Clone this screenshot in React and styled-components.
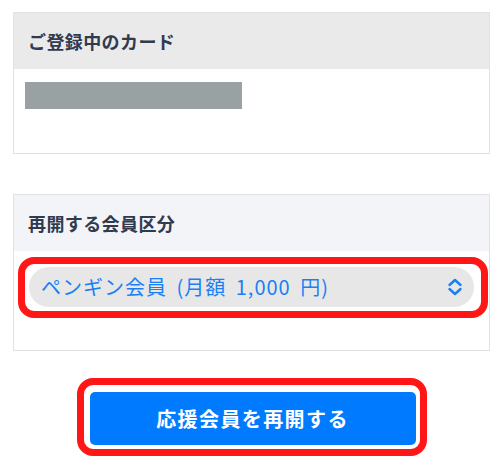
import React from "react";
import styled, { createGlobalStyle } from "styled-components";

const Global = createGlobalStyle`
  html, body { margin: 0; padding: 0; background: #ffffff; }
  body { font-family: "Noto Sans CJK JP", "Noto Sans", sans-serif; }
  * { box-sizing: border-box; }
`;

const Page = styled.div`
  width: 503px;
  padding: 12px 13px 0 13px;
  display: flex;
  flex-direction: column;
`;

const Card = styled.section`
  border: 1px solid #e2e2e2;
  background: #ffffff;
  display: flex;
  flex-direction: column;
  margin-bottom: ${(p) => p.$gap || 0}px;
`;

const CardHeader = styled.div`
  height: 56px;
  background: ${(p) => p.$bg};
  display: flex;
  align-items: center;
  padding: 0 14px;
`;

const Title = styled.h2`
  margin: 0;
  font-size: 18px;
  font-weight: 700;
  letter-spacing: 0.4px;
  color: #303b50;
  line-height: 1;
`;

const CardBody = styled.div`
  padding: ${(p) => p.$pad};
  min-height: ${(p) => p.$min}px;
  display: flex;
  flex-direction: column;
  align-items: flex-start;
`;

const Masked = styled.div`
  width: 217px;
  height: 27px;
  background: #9aa1a3;
`;

const Highlight = styled.div`
  border: 7px solid #ff1717;
  border-radius: ${(p) => p.$radius}px;
  padding: ${(p) => p.$pad};
  background: #ffffff;
  width: ${(p) => (p.$width ? p.$width + "px" : "100%")};
`;

const Select = styled.div`
  height: 40px;
  border-radius: 20px;
  background: #e7e7e7;
  display: flex;
  align-items: center;
  justify-content: space-between;
  padding: 0 11px 0 12px;
`;

const SelectText = styled.span`
  font-size: 20px;
  letter-spacing: 1px;
  word-spacing: 4px;
  color: #1a7ff5;
  line-height: 1;
`;

const Button = styled.button`
  width: 100%;
  height: 53px;
  border: none;
  border-radius: 5px;
  background: #007bff;
  color: #ffffff;
  font-family: inherit;
  font-size: 20px;
  font-weight: 700;
  letter-spacing: 1.4px;
  display: flex;
  align-items: center;
  justify-content: center;
  padding: 0;
`;

const ButtonArea = styled.div`
  margin-top: 27px;
  display: flex;
  justify-content: center;
`;

const Chevrons = () => (
  <svg width="16" height="18" viewBox="0 0 16 18" fill="none">
    <path d="M2.5 7 L8 2 L13.5 7" stroke="#1a7ff5" strokeWidth="2.4" strokeLinecap="round" strokeLinejoin="round" />
    <path d="M2.5 11 L8 16 L13.5 11" stroke="#1a7ff5" strokeWidth="2.4" strokeLinecap="round" strokeLinejoin="round" />
  </svg>
);

export default function App() {
  return (
    <>
      <Global />
      <Page>
        <Card $gap={40}>
          <CardHeader $bg="#eaeaea">
            <Title>ご登録中のカード</Title>
          </CardHeader>
          <CardBody $pad="13px 11px" $min={84}>
            <Masked />
          </CardBody>
        </Card>
        <Card>
          <CardHeader $bg="#f3f4f7">
            <Title>再開する会員区分</Title>
          </CardHeader>
          <CardBody $pad="6px 1px 0 4px" $min={99}>
            <Highlight $radius={16} $pad="3px 7px 4px 4px">
              <Select>
                <SelectText>ペンギン会員 (月額 1,000 円)</SelectText>
                <Chevrons />
              </Select>
            </Highlight>
          </CardBody>
        </Card>
        <ButtonArea>
          <Highlight $radius={16} $pad="7px 4px 4px 6px" $width={350}>
            <Button>応援会員を再開する</Button>
          </Highlight>
        </ButtonArea>
      </Page>
    </>
  );
}
